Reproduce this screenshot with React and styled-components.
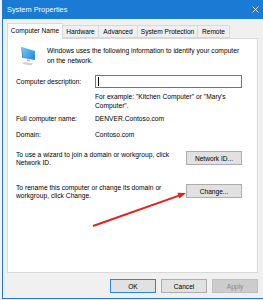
import React from "react";
import styled, { createGlobalStyle } from "styled-components";

const Global = createGlobalStyle`
  html, body { margin: 0; padding: 0; background: #f2f2f2; }
  body { font-family: "Liberation Sans", Arial, sans-serif; }
  * { box-sizing: border-box; }
`;

const BLUE = "#1a7ad4";

const Window = styled.div`
  margin-left: 2px;
  width: 261px;
  height: 299px;
  border-left: 1px solid ${BLUE};
  border-bottom: 1px solid ${BLUE};
  background: #f0f0f0;
  display: flex;
  flex-direction: column;
  font-size: 6.7px;
  color: #000;
`;

const TitleBar = styled.div`
  height: 19px;
  flex: none;
  background: ${BLUE};
  display: flex;
  align-items: center;
  padding-left: 4px;
`;

const Title = styled.div`
  flex: 1;
  color: #fff;
  font-size: 7.4px;
  line-height: 19px;
`;

const Close = styled.div`
  width: 12px;
  height: 19px;
  display: flex;
  align-items: center;
  justify-content: center;
  margin-right: 2px;
`;

const Body = styled.div`
  flex: 1;
  display: flex;
  flex-direction: column;
  padding: 4px 5px 0 4px;
`;

const Tabs = styled.div`
  display: flex;
  align-items: flex-end;
  height: 15px;
  position: relative;
  z-index: 1;
`;

const Tab = styled.div`
  width: ${(p) => p.$w}px;
  height: ${(p) => (p.$active ? 16 : 13)}px;
  margin-bottom: ${(p) => (p.$active ? -1 : 0)}px;
  background: ${(p) => (p.$active ? "#fff" : "#f0f0f0")};
  border: 1px solid #d9d9d9;
  border-bottom: ${(p) => (p.$active ? "none" : "1px solid #d9d9d9")};
  margin-left: ${(p) => (p.$first ? 0 : -1)}px;
  display: flex;
  align-items: center;
  justify-content: center;
  white-space: nowrap;
  font-size: 6.6px;
  padding-bottom: ${(p) => (p.$active ? 2 : 0)}px;
`;

const Panel = styled.div`
  position: relative;
  height: 235px;
  background: #fff;
  border: 1px solid #d9d9d9;
  padding: 7px 15px 0 8px;
  display: flex;
  flex-direction: column;
`;

const Intro = styled.div`
  display: flex;
  align-items: flex-start;
`;

const IconBox = styled.div`
  width: 31px;
  flex: none;
  padding: 1px 0 0 5px;
`;

const Para = styled.div`
  line-height: ${(p) => p.$lh || 9}px;
  white-space: nowrap;
`;

const FieldRow = styled.div`
  display: grid;
  grid-template-columns: 79px 1fr;
  align-items: center;
  min-height: ${(p) => p.$h || 16}px;
  margin-top: ${(p) => p.$mt || 0}px;
`;

const Input = styled.div`
  height: 13px;
  border: 1px solid #2a86d8;
  background: #fff;
  display: flex;
  align-items: center;
  padding-left: 2px;
`;

const Caret = styled.div`
  width: 1px;
  height: 9px;
  background: #000;
`;

const ActionRow = styled.div`
  display: flex;
  justify-content: space-between;
  align-items: flex-start;
  margin-top: ${(p) => p.$mt || 0}px;
`;

const Button = styled.div`
  width: ${(p) => p.$w || 46}px;
  height: 14px;
  background: ${(p) => (p.$disabled ? "#cccccc" : "#e1e1e1")};
  border: 1px solid
    ${(p) => (p.$primary ? "#2a86d8" : p.$disabled ? "#bfbfbf" : "#adadad")};
  color: ${(p) => (p.$disabled ? "#8a8a8a" : "#000")};
  display: flex;
  align-items: center;
  justify-content: center;
  font-size: 6.6px;
  flex: none;
`;

const Footer = styled.div`
  flex: 1;
  display: flex;
  justify-content: flex-end;
  align-items: flex-start;
  gap: 5px;
  padding-top: 6px;
`;

const ArrowSvg = styled.svg`
  position: absolute;
  left: 80px;
  top: 148px;
  overflow: visible;
`;

function ComputerIcon() {
  return (
    <svg width="15" height="19" viewBox="0 0 15 19">
      <defs>
        <linearGradient id="scr" x1="0" y1="0" x2="1" y2="1">
          <stop offset="0" stopColor="#7cc8f6" />
          <stop offset="1" stopColor="#1d84d6" />
        </linearGradient>
      </defs>
      <polygon points="1,0 14,4 14,13 2,11" fill="url(#scr)" />
      <polygon points="1,0 2,11 1.2,10.6 0.4,0.3" fill="#1565b0" />
      <polygon points="6,12.2 9,12.8 9,14.6 6,14" fill="#b8b8b8" />
      <polygon points="3,15 12,16.2 10.5,18.5 1.5,17" fill="#d2d2d2" />
    </svg>
  );
}

const TABS = [
  { label: "Computer Name", w: 56 },
  { label: "Hardware", w: 37 },
  { label: "Advanced", w: 40 },
  { label: "System Protection", w: 61 },
  { label: "Remote", w: 33 },
];

export default function App() {
  return (
    <>
      <Global />
      <Window>
        <TitleBar>
          <Title>System Properties</Title>
          <Close>
            <svg width="7" height="7" viewBox="0 0 7 7">
              <path d="M0.5 0.5 L6.5 6.5 M6.5 0.5 L0.5 6.5" stroke="#fff" strokeWidth="0.8" />
            </svg>
          </Close>
        </TitleBar>
        <Body>
          <Tabs>
            {TABS.map((t, i) => (
              <Tab key={t.label} $w={t.w} $active={i === 0} $first={i === 0}>
                {t.label}
              </Tab>
            ))}
          </Tabs>
          <Panel>
            <Intro>
              <IconBox>
                <ComputerIcon />
              </IconBox>
              <Para $lh={10}>
                Windows uses the following information to identify your computer
                <br />
                on the network.
              </Para>
            </Intro>
            <FieldRow $mt={8} $h={13}>
              <span>Computer description:</span>
              <Input>
                <Caret />
              </Input>
            </FieldRow>
            <FieldRow $mt={4} $h={18}>
              <span />
              <Para>
                For example: "Kitchen Computer" or "Mary's
                <br />
                Computer".
              </Para>
            </FieldRow>
            <FieldRow>
              <span>Full computer name:</span>
              <span>DENVER.Contoso.com</span>
            </FieldRow>
            <FieldRow>
              <span>Domain:</span>
              <span>Contoso.com</span>
            </FieldRow>
            <ActionRow $mt={9}>
              <Para $lh={8}>
                To use a wizard to join a domain or workgroup, click
                <br />
                Network ID.
              </Para>
              <Button $w={56}>Network ID...</Button>
            </ActionRow>
            <ActionRow $mt={17}>
              <Para $lh={8}>
                To rename this computer or change its domain or
                <br />
                workgroup, click Change.
              </Para>
              <Button $w={56}>Change...</Button>
            </ActionRow>
            <ArrowSvg width="105" height="45" viewBox="0 0 105 45">
              <line x1="5" y1="39" x2="91" y2="8.6" stroke="#e3221b" strokeWidth="2" />
              <polygon points="98,6 91.5,11.6 89.4,5.7" fill="#e3221b" />
            </ArrowSvg>
          </Panel>
          <Footer>
            <Button $primary>OK</Button>
            <Button>Cancel</Button>
            <Button $disabled>Apply</Button>
          </Footer>
        </Body>
      </Window>
    </>
  );
}
